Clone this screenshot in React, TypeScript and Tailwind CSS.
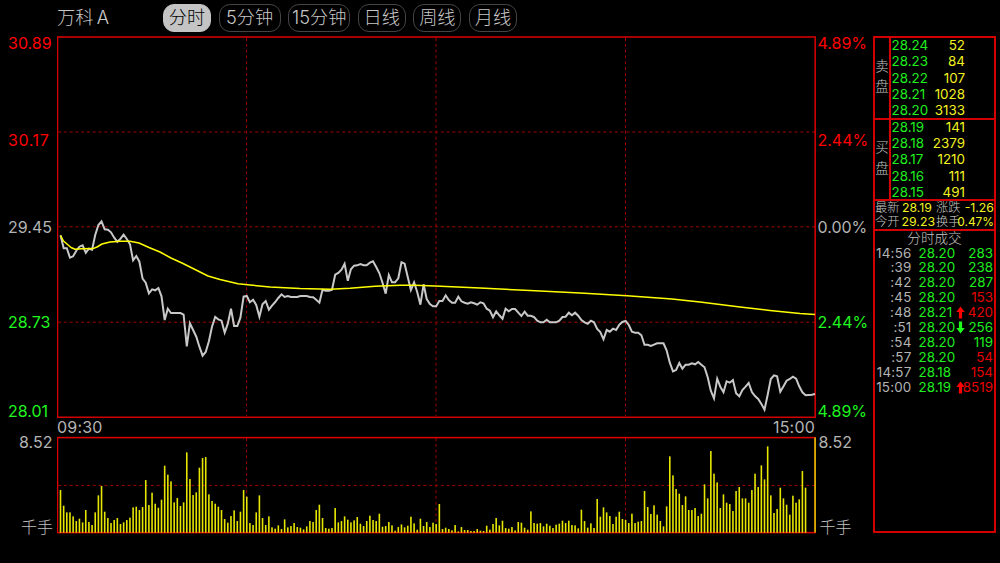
import React from 'react';

const STEP = 3.157;
const px = (i: number) => 3.5 + i * STEP;
const third = (base: number, values: number[]) => values.map((v) => base + v / 3);

// Minute prices, as vertical positions inside the price chart
const price = [
  ...third(174, [
    76, 115, 115, 143, 139, 122, 110, 106, 128, 116, 119, 75, 45, 34, 58, 59, 67, 83, 95, 86, 74, 87, 103, 151, 138, 155,
    206, 218, 250, 238, 241, 234, 259, 330, 296, 309, 309, 309, 309, 314, 409, 340, 360, 380, 410, 437, 426, 394, 350,
    321, 328, 332, 368, 341, 296, 348, 348, 323,
  ]),
  ...third(214, [
    140, 138, 157, 149, 165, 200, 163, 153, 179, 167, 156, 144, 133, 141, 138, 141, 141, 141, 138, 138, 138, 141, 142,
    149, 158, 119, 122, 122, 119, 74, 69, 59, 41, 92, 58, 47, 46, 42, 46, 46, 38, 34, 51, 70, 98, 131, 75, 97, 97, 85,
    37, 41, 82, 120, 97, 126, 164, 103, 147, 162,
  ]),
  ...third(244, [
    79, 79, 63, 63, 46, 60, 68, 68, 50, 64, 68, 71, 67, 70, 74, 67, 70, 86, 92, 112, 94, 106, 116, 86, 94, 87, 87, 98,
    108, 95, 107, 107, 111, 122, 127, 127, 119, 127, 127, 127, 122, 111, 110, 98, 106, 98, 107, 120, 127, 131, 122, 127,
    147, 156, 178, 150, 155, 146, 150, 134,
  ]),
  ...third(264, [
    66, 63, 75, 95, 98, 98, 106, 134, 134, 138, 134, 130, 130, 130, 151, 188, 214, 210, 189, 206, 194, 194, 190, 193,
    186, 194, 202, 232, 272, 295, 236, 260, 277, 244, 248, 240, 280, 289, 270, 260, 249, 276, 288, 297, 312, 329, 284,
    237, 226, 229, 275, 259, 242, 237, 230, 236, 259, 277, 286, 285, 284, 282,
  ]),
];

const average = [
  [60.5, 235.5], [63.5, 241], [67, 244], [71, 247.5], [75, 249.3], [82, 248.8], [93, 248.6], [97, 247], [102, 244],
  [110, 242], [120, 241.3], [130, 241.2], [139, 243], [149, 247.5], [160, 252], [171, 258], [183, 263.5], [197, 270.5],
  [208, 276], [220, 279.5], [238, 283.7], [250, 285], [270, 287], [300, 288.5], [330, 289.2], [350, 288.3],
  [375, 286.3], [400, 285.3], [415, 285.2], [435, 286], [480, 288], [530, 290.5], [580, 293], [627, 295.8],
  [672, 299], [700, 302], [740, 307], [770, 310.5], [800, 313.5], [815, 314.5],
];

// Volume bar heights in thirds of a pixel
const volume = [
  ...[
    270, 317, 337, 337, 349, 363, 356, 367, 330, 366, 375, 337, 286, 258, 335, 354, 369, 360, 354, 372, 367, 360, 353,
    322, 320, 330, 321, 240, 315, 278, 311, 323, 299, 197, 224, 244, 307, 294, 318, 307, 157, 237, 285, 277, 203, 174,
    171, 283, 303, 311, 320, 330, 357, 368, 348, 331, 363, 335, 270, 290, 369, 375, 337, 286, 354, 375, 349, 382, 386,
    376, 387, 358, 382, 378, 369, 381, 383, 388, 379, 363, 366, 330, 314, 354, 384, 386, 384, 324, 367, 363, 349, 359,
    367, 361, 351, 371, 378, 363, 347, 360, 363, 341, 380, 378, 366, 376, 392, 381, 373, 382, 377, 350, 370, 389, 356,
    378,
  ].map((v) => 398 - v),
  ...[
    291, 306, 293, 297, 237, 312, 308, 312, 316, 300, 319, 306, 315, 315, 318, 318, 312, 317, 318, 302, 314, 297, 279,
    301, 287, 309, 311, 306, 316, 291, 293, 308, 314, 259, 294, 296, 294, 304, 296, 302, 309, 299, 296, 287, 294, 287,
    300, 301, 310, 254, 288, 308, 295, 309, 222, 275, 247, 262, 273, 297, 275, 260, 282, 285, 294, 266, 294, 290, 288,
    198, 246, 267, 241, 269, 288, 304, 244, 94, 151, 192, 206, 240, 214, 255, 255, 249, 273, 266, 178, 220, 78, 146,
    172, 249, 208, 233, 237, 258, 198, 186, 220, 220, 233, 195, 146, 186, 121, 163, 64, 211, 264, 252, 188, 220, 239,
    269, 212, 233, 223, 138, 188,
  ].map((v) => 323 - v),
];

const tabs = [
  { label: '分时', box: 'w-[48px]', active: true },
  { label: '5分钟', box: 'w-[62px]' },
  { label: '15分钟', box: 'w-[62px]' },
  { label: '日线', box: 'w-[48px]' },
  { label: '周线', box: 'w-[48px]' },
  { label: '月线', box: 'w-[48px]' },
];

const asks = [['28.24', '52'], ['28.23', '84'], ['28.22', '107'], ['28.21', '1028'], ['28.20', '3133']];
const bids = [['28.19', '141'], ['28.18', '2379'], ['28.17', '1210'], ['28.16', '111'], ['28.15', '491']];

type Trade = { time: string; price: string; qty: string; up?: boolean; arrow?: 'up' | 'down' };
const trades: Trade[] = [
  { time: '14:56', price: '28.20', qty: '283' },
  { time: ':39', price: '28.20', qty: '238' },
  { time: ':42', price: '28.20', qty: '287' },
  { time: ':45', price: '28.20', qty: '153', up: true },
  { time: ':48', price: '28.21', qty: '420', up: true, arrow: 'up' },
  { time: ':51', price: '28.20', qty: '256', arrow: 'down' },
  { time: ':54', price: '28.20', qty: '119' },
  { time: ':57', price: '28.20', qty: '54', up: true },
  { time: '14:57', price: '28.18', qty: '154', up: true },
  { time: '15:00', price: '28.19', qty: '8519', up: true, arrow: 'up' },
];

function PriceChart() {
  const line = price.map((y, i) => `${px(i).toFixed(1)},${y.toFixed(1)}`).join(' ');
  const avg = average.map(([x, y]) => `${x - 57},${y - 36}`).join(' ');
  return (
    <svg width="760" height="382" className="block" fill="none">
      <g stroke="#a00000" strokeDasharray="3 2.8">
        {[96, 190.8, 286.2].map((y) => <path key={y} d={`M1 ${y}H758`} />)}
        {[189.6, 379, 568.5].map((x) => <path key={x} d={`M${x} 2V380`} />)}
      </g>
      <rect x="0.5" y="1" width="757.7" height="380.3" stroke="#d00000" strokeWidth="1.6" />
      <polyline points={line} stroke="#c8c8c8" strokeWidth="2" strokeLinejoin="miter" />
      <polyline points={avg} stroke="#ffff00" strokeWidth="1.5" strokeLinejoin="round" />
    </svg>
  );
}

function VolumeChart() {
  return (
    <svg width="760" height="98" className="block" fill="none">
      <g stroke="#a00000" strokeDasharray="3 2.8">
        <path d="M1 49.4H758" />
        {[189.6, 379, 568.5].map((x) => <path key={x} d={`M${x} 2V96`} />)}
      </g>
      <rect x="0.5" y="1.6" width="757.7" height="95" stroke="#e00000" strokeWidth="1.5" />
      {volume.map((h, i) => (
        <rect key={i} x={px(i) - 0.8} y={96.7 - h / 3} width="1.6" height={h / 3} fill="#e6e600" />
      ))}
      <rect x="757.2" y="1.5" width="1.8" height="95" fill="#d6ae00" />
    </svg>
  );
}

function Arrow({ dir }: { dir: 'up' | 'down' }) {
  return (
    <svg width="9" height="13" viewBox="0 0 9 13" className={dir === 'up' ? 'shrink-0 fill-[#ff0000]' : 'shrink-0 rotate-180 fill-[#1bff1b]'}>
      <path d="M4.5 0.5L8.7 6H6.1V12.5H2.9V6H0.3Z" />
    </svg>
  );
}

function Book({ title, rows }: { title: string; rows: string[][] }) {
  return (
    <div className="flex h-[81.5px] border-b-2 border-[#d40000]">
      <div className="flex w-[16px] flex-col items-center border-r-2 border-[#d40000] pt-[17.5px] text-[13.5px] font-light leading-[20.6px] text-[#c4c4c4]">
        {title.split('').map((c) => <span key={c}>{c}</span>)}
      </div>
      <div className="-mt-[1px] flex flex-1 flex-col text-[13.4px] leading-[16.35px]">
        {rows.map(([p, q]) => (
          <div key={p} className="flex justify-between pl-[0.5px] pr-[29px]">
            <span className="text-[#1fee1f]">{p}</span>
            <span className="text-[#f2f220]">{q}</span>
          </div>
        ))}
      </div>
    </div>
  );
}

function Axis({ right }: { right?: boolean }) {
  const labels = right ? ['4.89%', '2.44%', '0.00%', '2.44%', '4.89%'] : ['30.89', '30.17', '29.45', '28.73', '28.01'];
  const rows = ['h-[96.5px]', 'h-[87.5px]', 'h-[95px]', 'h-[89px]', 'h-[31px]'];
  const colors = ['text-[#ff0000]', 'text-[#ff0000]', 'text-[#b4b4b4]', 'text-[#1ff51f]', 'text-[#1ff51f]'];
  return (
    <div className={right ? 'flex w-[57px] flex-col pl-[0.5px] text-[16px] leading-[18px]' : 'flex w-[57px] flex-col pl-[8px] text-[16px] leading-[18px]'}>
      {labels.map((l, i) => (
        <div key={i} className={`${rows[i]} ${colors[i]} -translate-y-[2px] ${l === '30.17' ? 'tracking-[0.6px]' : ''}`}>{l}</div>
      ))}
      <div className={right ? 'h-[84px] -translate-y-[2px] pl-[1px]' : 'h-[84px] -translate-y-[2px] pl-[11px]'}>8.52</div>
      <div className={right ? '-translate-y-[1.5px] pl-[2px] font-light text-[#c0c0c0]' : '-translate-y-[1.5px] pl-[13px] font-light text-[#c0c0c0]'}>千手</div>
    </div>
  );
}

export default function App() {
  return (
    <div className="h-[563px] w-[1000px] overflow-hidden whitespace-nowrap bg-black font-['Inter','Noto_Sans_CJK_SC',sans-serif] font-normal text-[#b4b4b4]">
      <header className="flex h-[36px] items-center pl-[57px]">
        <div className="w-[106px] text-[18.3px] font-light text-[#c8c8c8] [word-spacing:-2px]">万科 A</div>
        <nav className="flex gap-[7.6px]">
          {tabs.map((t) => (
            <button
              key={t.label}
              className={`flex h-[28px] shrink-0 items-center justify-center rounded-[11px] border text-[18.2px] font-light ${t.box} ${
                t.active ? 'border-[#c4c4c4] bg-[#c4c4c4] text-black' : 'border-[#444444] text-[#c8c8c8]'
              }`}
            >
              {t.label}
            </button>
          ))}
        </nav>
      </header>
      <main className="flex h-[527px]">
        <Axis />
        <div className="w-[760px]">
          <PriceChart />
          <div className="flex h-[18px] justify-between pr-[2px] text-[16px] leading-[18px] tracking-[0.2px]">
            <span>09:30</span>
            <span>15:00</span>
          </div>
          <VolumeChart />
        </div>
        <Axis right />
        <aside className="-ml-[1px] flex h-[497px] w-[123px] flex-col border-2 border-[#d40000]">
          <Book title="卖盘" rows={asks} />
          <Book title="买盘" rows={bids} />
          <div className="-mt-[0.5px] grid h-[30px] grid-cols-[27px_34px_25px_33px] border-b-2 border-[#d40000] text-[12.3px] leading-[14.8px] text-[#b4b4b4]">
            <span className="font-light text-[#c4c4c4]">最新</span><span className="text-[#f2f220]">28.19</span><span className="font-light text-[#c4c4c4]">涨跌</span><span className="flex justify-end text-[#f2f220]">-1.26</span>
            <span className="font-light text-[#c4c4c4]">今开</span><span className="flex justify-end pr-[1px] text-[#f2f220]">29.23</span><span className="font-light text-[#c4c4c4]">换手</span><span className="flex justify-end text-[11.9px] text-[#f2f220]">0.47%</span>
          </div>
          <div className="text-center text-[13.6px] font-light leading-[15px] text-[#c4c4c4]">分时成交</div>
          <div className="text-[13.4px] leading-[14.93px]">
            {trades.map((t) => (
              <div key={t.time} className="flex">
                <span className="flex w-[36.5px] justify-end tracking-[0.2px] text-[#b4b4b4]">{t.time}</span>
                <span className="w-[44.5px] pl-[7px] text-[#1fee1f]">{t.price}</span>
                <span className="flex w-[8px] items-center">{t.arrow && <Arrow dir={t.arrow} />}</span>
                <span className={`flex w-[29px] justify-end ${t.up ? 'text-[#e60000]' : 'text-[#1fee1f]'}`}>{t.qty}</span>
              </div>
            ))}
          </div>
        </aside>
      </main>
    </div>
  );
}
